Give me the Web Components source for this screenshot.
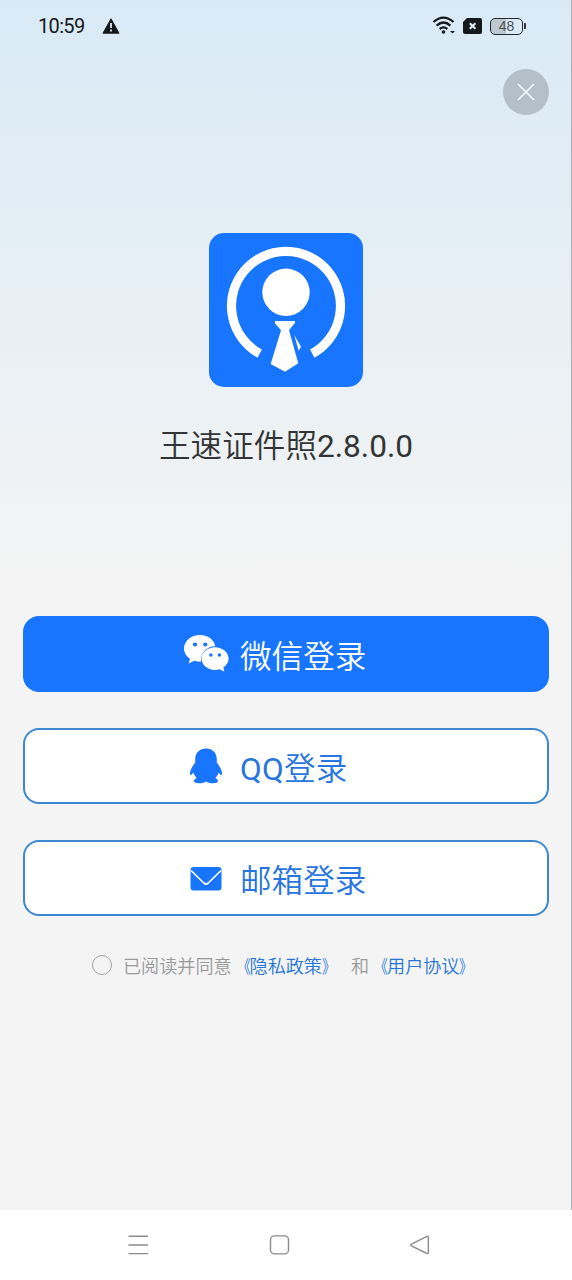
<!DOCTYPE html>
<html lang="zh-CN">
<head>
<meta charset="utf-8">
<title>登录</title>
<style>
html,body{margin:0;height:100%}
body{font-family:Roboto,"Noto Sans CJK SC",sans-serif;overflow:hidden}
</style>
</head>
<body>
<login-page></login-page>
<script>
const define = (name, html) => {
  const t = document.createElement('template');
  t.innerHTML = html;
  customElements.define(name, class extends HTMLElement {
    constructor() {
      super();
      this.attachShadow({mode: 'open'}).append(t.content.cloneNode(true));
    }
  });
};

define('status-bar', `
<style>
:host{display:flex;align-items:center;height:52px;box-sizing:border-box;padding:0 45px 0 38px;color:#15181b}
.time{font-size:20px;line-height:24px;width:64px;letter-spacing:-.65px}
.warn{display:block}
.right{display:flex;align-items:center;margin-left:auto}
.bat{box-sizing:border-box;width:33px;height:17px;border:1.5px solid #25292d;border-radius:5px;background:linear-gradient(90deg,#bdc8d0 48%,transparent 48%);font:14px/15px "Liberation Sans",sans-serif;text-align:center;color:#4a5157;margin-left:8px}
.tip{width:2px;height:6px;background:#30363b;border-radius:0 1px 1px 0;margin-left:1px}
</style>
<span class="time">10:59</span>
<svg class="warn" width="18" height="16" viewBox="0 0 18 16"><path d="M9 .8 17 15.2H1Z" fill="#15181b" stroke="#15181b" stroke-linejoin="round"/><path d="M9 5v5M9 11.5v2" stroke="#dcebf5" stroke-width="1.8"/></svg>
<div class="right">
<svg width="24" height="20" viewBox="0 0 24 20" fill="none" stroke="#15181b" stroke-width="2.3"><path d="M1.5 6Q11.5-2.8 21.500 6M4.600 9.600Q11.500 3.400 18.400 9.600M7.700 13Q11.500 9.800 15.300 13"/><circle cx="11.500" cy="16" r="1.8" fill="#15181b" stroke="none"/><path d="M18 15h5l-2.5 2.500Z" fill="#15181b" stroke="none"/></svg>
<svg width="19" height="16" viewBox="0 0 19 16" style="margin-left:7px;margin-top:-1px"><path d="M4 0h13a2 2 0 0 1 2 2v12a2 2 0 0 1-2 2H2a2 2 0 0 1-2-2V4Z" fill="#15181b"/><path d="m6.800 5.200 5.600 5.600m0-5.600-5.600 5.600" stroke="#e4eff7" stroke-width="2"/></svg>
<div class="bat">48</div><div class="tip"></div>
</div>`);

define('close-button', `
<style>
:host{display:flex;align-items:center;justify-content:center;width:46px;height:46px;border-radius:50%;background:#b5bfc8}
</style>
<svg width="18" height="18" viewBox="0 0 18 18"><path d="m1 1 16 16m0-16L1 17" stroke="#f7fafc" stroke-width="1.6"/></svg>`);

define('app-logo', `
<style>:host{display:block;width:154px;height:154px;border-radius:15px;background:#1775ff}svg{display:block}</style>
<svg width="154" height="154" viewBox="0 0 154 154">
<path d="M50.7 120.6A54.5 54.5 0 1 1 103.3 120.6" fill="none" stroke="#fff" stroke-width="9.2"/>
<circle cx="77" cy="59.3" r="23.7" fill="#fff"/>
<path d="M67 88H85Q87 88.500 85.500 90.500L80 97.200 89.300 130.300 76 138.700 61.700 131 72 97.200 66.300 90.700Q65 88.500 67 88ZM85.200 102 92 113.700 89.700 117.700Z" fill="#fff"/>
</svg>`);

define('login-button', `
<style>
:host{display:flex;align-items:center;box-sizing:border-box;height:76px;padding-left:159px;border:2px solid #3f86d2;border-radius:16px;background:#fff;color:#2675e0;font-size:31.600px;font-weight:350;line-height:40px}
:host([primary]){background:#1775ff;border-color:#1775ff;color:#fff}
.icon{width:45px;margin-right:11px;display:flex;justify-content:center}
.label{padding-top:7px}
</style>
<span class="icon"><slot name="icon"></slot></span><span class="label"><slot></slot></span>`);

define('agreement-line', `
<style>
:host{display:flex;align-items:center;height:26px;padding-left:92px;font-size:18.100px;line-height:26px;color:#999;white-space:pre;font-weight:350}
i{box-sizing:border-box;width:20px;height:20px;border:1.2px solid #a3a3a3;border-radius:50%;margin-right:11px}
span{padding-top:3px}
.link{color:#2675d8;display:flex}
.link em{font-style:normal;width:18px;transform:scaleX(.75) translateX(1px);transform-origin:right}
.link em:last-child{transform:scaleX(.75);transform-origin:left}
.and{margin-left:11px}
</style>
<i></i><span>已阅读并同意</span><span class="link"><em>《</em>隐私政策<em>》</em></span><span class="and">和</span><span class="link"><em>《</em>用户协议<em>》</em></span>`);

define('nav-bar', `
<style>
:host{display:flex;align-items:center;height:70px;background:#fff;padding-left:127px}
svg{display:block;fill:none;stroke:#8c8c8c;stroke-width:1.4}
svg+svg{margin-left:119px}
</style>
<svg width="22" height="22" viewBox="0 0 22 22"><path d="M1.500 2.200h19.500M1.500 11h19.500M1.500 19.600h19.500"/></svg>
<svg width="22" height="22" viewBox="0 0 22 22"><rect x="2.500" y="1.900" width="18" height="18" rx="4"/></svg>
<svg width="22" height="22" viewBox="0 0 22 22"><path d="M17.800 2.300 2.500 10q-1.600 1 0 2L17.800 19.500q1.500.5 1.500-1.100V3.400q0-1.600-1.500-1.100Z"/></svg>`);

define('login-page', `
<style>
:host{display:flex;flex-direction:column;box-sizing:border-box;width:572px;height:1280px;background:linear-gradient(#d9eaf6,#f4f4f4 580px)}
main{flex:1;display:flex;flex-direction:column;padding:17px 22px 0 23px}
close-button{align-self:flex-end}
app-logo{align-self:center;margin-top:118px}
h1{margin:38px 0 0;font-size:31.600px;line-height:44px;font-weight:350;text-align:center;color:#323435}
h1 span{font-weight:400}
login-button span{font-weight:400;letter-spacing:.3px}
.list{display:flex;flex-direction:column;gap:36px;margin-top:147px}
agreement-line{margin:36px -22px 0 -23px}
.frame{display:flex;flex:1}
.edge{width:1px;background:#a9b0b5}
.col{flex:1;display:flex;flex-direction:column}
svg{display:block}
</style>
<div class="frame"><div class="col">
<status-bar></status-bar>
<main>
<close-button></close-button>
<app-logo></app-logo>
<h1>王速证件照<span>2.8.0.0</span></h1>
<div class="list">
<login-button primary>
<svg slot="icon" width="45" height="38" viewBox="0 1 45 38"><path d="M16 1C7 1 0 7 0 14.500c0 4.300 2.200 7.800 6 10.200L4.600 29.500 10.300 26.800q3 1 7 .9C16 19 23 12 31.300 12.200 30 5.500 23.500 1 16 1Z" fill="#fff"/><path d="M31 13.200c-7.500 0-13.400 5-13.400 11.300S23.500 36 31 36q2.500 0 4.800-.8l4.600 2.600-1.100-4.300c3.200-2.100 5.300-5.300 5.300-9 0-6.300-6.100-11.300-13.600-11.300Z" fill="#fff"/><g fill="#1775ff"><circle cx="11" cy="10.500" r="2.100"/><circle cx="21.300" cy="10.500" r="2.100"/><circle cx="26.800" cy="21" r="1.800"/><circle cx="35.400" cy="21" r="1.800"/></g></svg>
微信登录</login-button>
<login-button>
<svg slot="icon" width="34" height="36" viewBox="1 0 34 36"><path d="M17 .5C10.500.5 6.200 5 6.200 11.200v3.200C3.500 18 1 22 1 25.200c0 2.600 1.500 2.300 3.500-.6.6 2.300 1.700 4.100 3.200 5.500C5.700 31 5 32 5 33c0 3.200 9.800 2.600 12 .4 2.200 2.200 12 2.800 12-.4 0-1-.7-2-2.700-2.900 1.500-1.400 2.600-3.200 3.200-5.500 2 2.900 3.500 3.200 3.500.6 0-3.200-2.500-7.200-5.200-10.800v-3.200C27.800 5 23.500.5 17 .5Z" fill="#1775ff"/></svg>
<span>QQ</span>登录</login-button>
<login-button>
<svg slot="icon" width="34" height="28" viewBox="0 -3 34 28"><rect x=".5" width="31" height="23.500" rx="3" fill="#1775ff"/><path d="M1 3.500 13.800 16q2.200 2 4.400 0L31 3.500" fill="none" stroke="#fff" stroke-width="1.700"/></svg>
邮箱登录</login-button>
</div>
<agreement-line></agreement-line>
</main>
</div><div class="edge"></div></div>
<nav-bar></nav-bar>`);
</script>
</body>
</html>
